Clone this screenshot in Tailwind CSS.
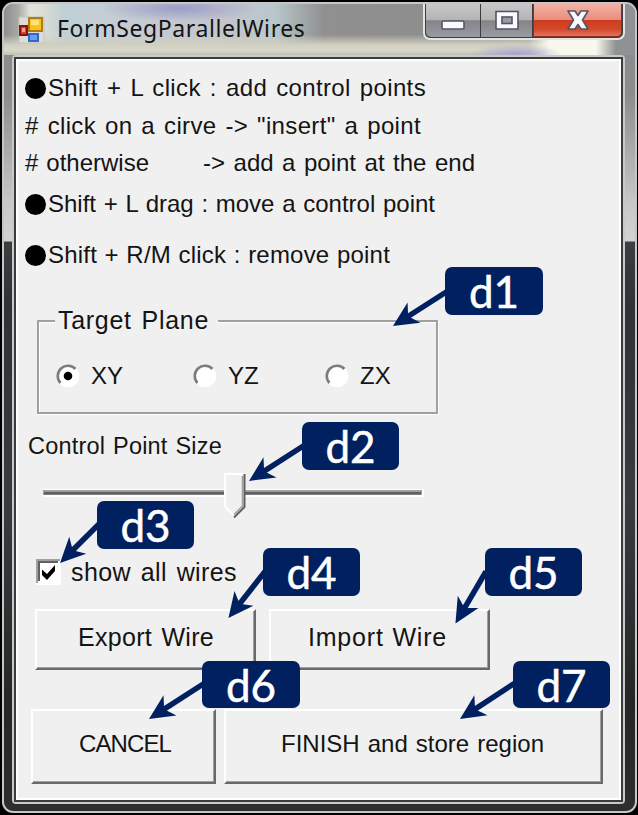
<!DOCTYPE html>
<html lang="en">
<head>
<meta charset="utf-8">
<title>FormSegParallelWires</title>
<script src="https://cdn.jsdelivr.net/npm/@tailwindcss/browser@4"></script>
</head>
<body class="bg-black w-[638px] h-[815px] overflow-hidden font-['Liberation_Sans',sans-serif] text-[24px] text-[#141414]">
<div class="relative w-[638px] h-[815px] pl-[2px] pt-[2px]">
  <!-- window frame -->
  <div class="w-[635px] h-[811px] rounded-[11px] border-2 border-[#c4c6c8] overflow-hidden flex flex-col bg-[linear-gradient(180deg,#8a8a8a_0px,#8c8c8c_90px,#c8c8c8_200px,#d2d2d2_237px,#3c3e40_238px,#303334_300px,#383c3e_500px,#262626_700px,#2e2e2e_100%)]">
    <!-- title bar -->
    <div class="h-[51px] shrink-0 flex items-start bg-[radial-gradient(ellipse_46px_10px_at_512px_50px,#a8a4d0_0%,transparent_100%),linear-gradient(90deg,transparent_525px,#f8f8ec_545px,#f8f8ec_592px,#8e9294_612px),linear-gradient(180deg,transparent_60%,#d0cfc0_80%,#d8d7c8_90%,#c0c0b8_100%),radial-gradient(ellipse_80px_14px_at_175px_4px,#9c9cc8_0%,transparent_100%),linear-gradient(90deg,#8e8e8e_0px,#a8a8a4_14px,#e2e2da_26px,#deded6_36px,#c0d0d6_60px,#c6ccd2_120px,#c4c6cc_220px,#b8c8cc_270px,#909090_320px,#8e8e8e_420px,#a0a0a0_100%)]">
      <svg class="ml-[14px] mt-[12px] shrink-0" width="28" height="28" viewBox="0 0 28 28">
        <rect x="1" y="1" width="25" height="26" fill="#dcdcd8" stroke="#c4c4c0"/>
        <rect x="11" y="2" width="13" height="13" fill="#f7c320" stroke="#b07c10" stroke-width="2"/>
        <rect x="13" y="4" width="8" height="5" fill="#ffe27a"/>
        <rect x="2" y="10" width="7" height="9" fill="#d84030" stroke="#901008" stroke-width="2"/>
        <rect x="4" y="12" width="3" height="4" fill="#f4a090"/>
        <rect x="11" y="18" width="9" height="7" fill="#6c9cf0" stroke="#3468c8" stroke-width="2"/>
      </svg>
      <div class="ml-[11px] mt-[8px] w-[260px] leading-[32px] text-[23px] tracking-[0.6px] whitespace-nowrap font-['Noto_Sans',sans-serif]">FormSegParallelWires</div>
      <div class="ml-auto mr-[10px] -mt-px flex h-[37px] w-[202px] shrink-0 rounded-b-[7px] border-2 border-t-0 border-[#e4e4e4] bg-[#3c3c40] overflow-hidden">
        <div class="w-[54px] ml-[1px] mb-[1px] rounded-bl-[5px] flex justify-center bg-[linear-gradient(180deg,#c8c8c8_0%,#b4b4b6_50%,#848488_52%,#9a9aa2_100%)]">
          <svg width="26" height="34"><rect x="2" y="18" width="22" height="8" rx="1.5" fill="#fafafa" stroke="#50546a" stroke-width="1.6"/></svg>
        </div>
        <div class="w-[51px] ml-[1px] mb-[1px] flex justify-center bg-[linear-gradient(180deg,#c8c8c8_0%,#b4b4b6_50%,#848488_52%,#9a9aa2_100%)]">
          <svg width="26" height="34"><path d="M2 8.500h22v17.500h-22z" fill="#fafafa" stroke="#50546a" stroke-width="1.600"/><rect x="8" y="14" width="10" height="6.500" fill="#9a9aa0" stroke="#50546a" stroke-width="1.600"/></svg>
        </div>
        <div class="flex-1 ml-[1px] mb-[1px] mr-[1px] rounded-br-[5px] border border-t-0 border-[#8c3024] flex justify-center bg-[linear-gradient(180deg,#f4b4a8_0%,#ea8e7c_50%,#cc3c1c_52%,#d4492c_80%,#e0745c_100%)]">
          <svg width="26" height="34"><path d="M3 8h7l3 4.500l3-4.500h7l-5.500 9l5.500 9h-7l-3-4.500l-3 4.500h-7l5.500-9z" fill="#fafafa" stroke="#50546a" stroke-width="1.600" stroke-linejoin="round"/></svg>
        </div>
      </div>
    </div>
    <!-- client area -->
    <div class="ml-[8px] w-[613px] h-[749px] shrink-0 border-2 border-[#c8c9ca] rounded-[4px]">
      <div class="h-full border-2 border-[#3a3c3c]">
        <div class="h-full border-2 border-white bg-[#f0f0f0] flex flex-col whitespace-nowrap">
          <div class="ml-[7px] mt-[10px] flex items-center h-[34px]">
            <span class="size-[21px] rounded-full bg-black"></span>
            <div class="ml-[2px] w-[378px] leading-[34px] tracking-[0.35px] [text-align-last:justify]">Shift + L click : add control points</div>
          </div>
          <div class="ml-[7px] mt-[4px] w-[396px] leading-[34px] tracking-[0.35px] [text-align-last:justify]"># click on a cirve -&gt; "insert" a point</div>
          <div class="ml-[7px] mt-[3px] flex justify-between w-[450px] leading-[34px]">
            <div class="w-[124px] [text-align-last:justify]"># otherwise</div>
            <div class="w-[272px] [text-align-last:justify]">-&gt; add a point at the end</div>
          </div>
          <div class="ml-[7px] mt-[7px] flex items-center h-[34px]">
            <span class="size-[21px] rounded-full bg-black"></span>
            <div class="ml-[2px] w-[387px] leading-[34px] [text-align-last:justify]">Shift + L drag : move a control point</div>
          </div>
          <div class="ml-[7px] mt-[17px] flex items-center h-[34px]">
            <span class="size-[21px] rounded-full bg-black"></span>
            <div class="ml-[2px] w-[342px] leading-[34px] tracking-[0.2px] [text-align-last:justify]">Shift + R/M click : remove point</div>
          </div>
          <!-- plane selector -->
          <div class="ml-[19px] mt-[32px] h-[110px] w-[401px] relative pt-[16px]">
            <div class="h-[94px] border-2 border-[#a0a0a0] shadow-[inset_1px_1px_0_#fff,1px_1px_0_#fff]"></div>
            <div class="absolute left-[18px] top-0 w-[163px] pl-[3px] bg-[#f0f0f0] leading-[32px] text-[25px]"><div class="w-[151px] tracking-[0.7px] [text-align-last:justify]">Target Plane</div></div>
            <div class="absolute left-[19px] top-[55px] flex leading-[34px]">
              <div class="flex items-center w-[137px] gap-[11px]">
                <svg width="24" height="24"><circle cx="12" cy="12" r="9.500" fill="#fff"/><path d="M4.500 19A10 10 0 0 1 19.500 5" fill="none" stroke="#7c7c7c" stroke-width="2.600"/><path d="M19.500 5A10 10 0 0 1 4.500 19" fill="none" stroke="#fff" stroke-width="2"/><circle cx="12" cy="12" r="4.300"/></svg>XY
              </div>
              <div class="flex items-center w-[132px] gap-[11px]">
                <svg width="24" height="24"><circle cx="12" cy="12" r="9.500" fill="#fff"/><path d="M4.500 19A10 10 0 0 1 19.500 5" fill="none" stroke="#7c7c7c" stroke-width="2.600"/><path d="M19.500 5A10 10 0 0 1 4.500 19" fill="none" stroke="#fff" stroke-width="2"/></svg>YZ
              </div>
              <div class="flex items-center gap-[11px]">
                <svg width="24" height="24"><circle cx="12" cy="12" r="9.500" fill="#fff"/><path d="M4.500 19A10 10 0 0 1 19.500 5" fill="none" stroke="#7c7c7c" stroke-width="2.600"/><path d="M19.500 5A10 10 0 0 1 4.500 19" fill="none" stroke="#fff" stroke-width="2"/></svg>ZX
              </div>
            </div>
          </div>
          <div class="ml-[10px] mt-[15px] w-[194px] leading-[34px] text-[23.5px] tracking-[0.2px] [text-align-last:justify]">Control Point Size</div>
          <!-- slider -->
          <svg class="ml-[24px] mt-[9px] shrink-0" width="384" height="48">
            <rect x="1" y="17" width="381" height="8" fill="#fff"/>
            <rect x="1" y="18" width="379" height="5" fill="#a0a0a0"/>
            <rect x="2" y="20" width="377" height="2.500" fill="#606060"/>
            <path d="M182 2h21v33l-10.500 11l-10.500-11z" fill="#f0f0f0"/>
            <path d="M202 2h-19v32.500l9 9" fill="none" stroke="#fff" stroke-width="2"/>
            <path d="M200.500 4v30l-8.500 8.500" fill="none" stroke="#a0a0a0" stroke-width="1.500"/>
            <path d="M202.500 2v33l-10.500 10.500" fill="none" stroke="#606060" stroke-width="2"/>
          </svg>
          <div class="ml-[18px] mt-[35px] flex items-center h-[34px]">
            <svg width="25" height="26"><path d="M0 0h25v26h-25z" fill="#fff"/><path d="M1 24v-23h23" fill="none" stroke="#a0a0a0" stroke-width="2"/><path d="M3 22v-19h19" fill="none" stroke="#606060" stroke-width="2"/><path d="M6 10.500l5 4.500l8-9v6l-8 9l-5-5z"/></svg>
            <div class="ml-[10px] w-[166px] leading-[34px] text-[25px] tracking-[0.4px] [text-align-last:justify]">show all wires</div>
          </div>
          <div class="ml-[17px] mt-[20px] flex gap-[13px] text-[25px]">
            <div class="w-[221px] h-[61px] border-2 border-white border-r-[#696969] border-b-[#696969] shadow-[inset_-1px_-1px_0_#a0a0a0] pl-[41px] leading-[53px]"><div class="w-[136px] tracking-[0.3px] [text-align-last:justify]">Export Wire</div></div>
            <div class="w-[221px] h-[61px] border-2 border-white border-r-[#696969] border-b-[#696969] shadow-[inset_-1px_-1px_0_#a0a0a0] pl-[37px] leading-[53px]"><div class="w-[139px] tracking-[0.8px] [text-align-last:justify]">Import Wire</div></div>
          </div>
          <div class="ml-[13px] mt-[39px] flex gap-[8px]">
            <div class="w-[185px] h-[75px] border-2 border-white border-r-[#696969] border-b-[#696969] shadow-[inset_-1px_-1px_0_#a0a0a0] pl-[46px] leading-[66px] tracking-[-0.9px]">CANCEL</div>
            <div class="w-[379px] h-[75px] border-2 border-white border-r-[#696969] border-b-[#696969] shadow-[inset_-1px_-1px_0_#a0a0a0] pl-[55px] leading-[66px]"><div class="w-[263px] [text-align-last:justify]">FINISH and store region</div></div>
          </div>
        </div>
      </div>
    </div>
  </div>
  <!-- callouts -->
  <svg class="absolute left-0 top-0" width="638" height="815">
    <defs><marker id="head" markerUnits="userSpaceOnUse" markerWidth="30" markerHeight="30" refX="18" refY="13" orient="auto" overflow="visible"><path d="M26 13L1 1L8 13L1 25z" fill="#002060"/></marker></defs>
    <g stroke="#002060" stroke-width="5.500">
      <path d="M447 291.500L399.700 321.700" marker-end="url(#head)"/>
      <path d="M304 445.500L255.700 476.600" marker-end="url(#head)"/>
      <path d="M99 524L65.700 557.300" marker-end="url(#head)"/>
      <path d="M265 571.500L233.400 611.700" marker-end="url(#head)"/>
      <path d="M486 571.500L459.500 616.600" marker-end="url(#head)"/>
      <path d="M204 683.500L155.700 714.600" marker-end="url(#head)"/>
      <path d="M515 683L466.700 714.600" marker-end="url(#head)"/>
    </g>
  </svg>
  <div class="font-[Lato,sans-serif] text-[44px] text-white text-center leading-[49px] [-webkit-text-stroke:0.5px_#fff]">
    <div class="absolute left-[445px] top-[267px] w-[98px] h-[48px] rounded-[7px] bg-[#002060]">d1</div>
    <div class="absolute left-[302px] top-[422px] w-[97px] h-[48px] rounded-[7px] bg-[#002060]">d2</div>
    <div class="absolute left-[97px] top-[501px] w-[97px] h-[48px] rounded-[7px] bg-[#002060]">d3</div>
    <div class="absolute left-[263px] top-[548px] w-[97px] h-[48px] rounded-[7px] bg-[#002060]">d4</div>
    <div class="absolute left-[485px] top-[548px] w-[97px] h-[48px] rounded-[7px] bg-[#002060]">d5</div>
    <div class="absolute left-[202px] top-[661px] w-[98px] h-[47px] rounded-[7px] bg-[#002060]">d6</div>
    <div class="absolute left-[513px] top-[661px] w-[97px] h-[47px] rounded-[7px] bg-[#002060]">d7</div>
  </div>
</div>
</body>
</html>
